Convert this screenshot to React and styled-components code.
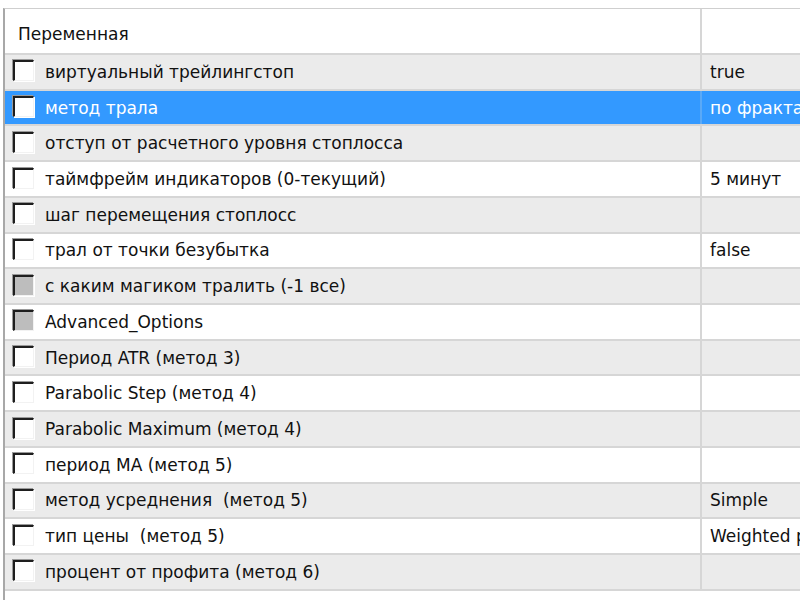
import styled, { createGlobalStyle } from 'styled-components';

const GlobalStyle = createGlobalStyle`
    html, body {
        margin: 0;
        padding: 0;
        background: #fff;
        overflow: hidden;
    }
    body {
        font-family: "DejaVu Sans", "Liberation Sans", sans-serif;
        font-size: 17px;
        color: #111;
    }
`

const Frame = styled.div`
    margin: 8px 0 0 3px;
    width: 820px;
    height: 600px;
    border-left: 2px solid #a8a8a8;
    border-top: 1px solid #cfcfcf;
    background: #fff;
`

const HeaderRow = styled.div`
    display: flex;
    height: 46px;
    border-bottom: 2px solid #d6d6d6;
    box-sizing: border-box;
`

const HeaderCell = styled.div`
    display: flex;
    align-items: center;
    width: ${p => p.$w ? p.$w + 'px' : 'auto'};
    flex: ${p => p.$w ? 'none' : '1'};
    padding: 5px 0 0 13px;
    box-sizing: border-box;
    border-right: ${p => p.$w ? '2px solid #d6d6d6' : 'none'};
`

const Row = styled.div`
    display: flex;
    height: 35.73px;
    box-sizing: border-box;
    border-bottom: 2px solid #d6d6d6;
    background: ${p => p.$selected ? '#3399ff' : p.$odd ? '#ebebeb' : '#fff'};
    color: ${p => p.$selected ? '#fff' : '#111'};
`

const NameCell = styled.div`
    display: flex;
    align-items: center;
    gap: 11px;
    width: 697px;
    padding-left: 8px;
    box-sizing: border-box;
    border-right: 2px solid ${p => p.$selected ? '#5aa9f7' : '#d6d6d6'};
    white-space: pre;
`

const ValueCell = styled.div`
    display: flex;
    align-items: center;
    flex: 1;
    padding-left: 8px;
    white-space: nowrap;
    overflow: hidden;
`

const Check = styled.span`
    flex: none;
    width: 21px;
    height: 21px;
    margin-top: -2px;
    box-sizing: border-box;
    border-style: solid;
    border-width: 2px 1px 1px 2px;
    border-color: #1e1e1e #f2f2f2 #f2f2f2 #1e1e1e;
    box-shadow: -1px -1px 0 #9a9a9a, 1px 1px 0 #fff;
    background: ${p => p.$grey ? '#bdbdbd' : '#fff'};
`

const rows = [
    { name: 'виртуальный трейлингстоп', value: 'true' },
    { name: 'метод трала', value: 'по фракталам', selected: true },
    { name: 'отступ от расчетного уровня стоплосса', value: '' },
    { name: 'таймфрейм индикаторов (0-текущий)', value: '5 минут' },
    { name: 'шаг перемещения стоплосс', value: '' },
    { name: 'трал от точки безубытка', value: 'false' },
    { name: 'с каким магиком тралить (-1 все)', value: '', grey: true },
    { name: 'Advanced_Options', value: '', grey: true },
    { name: 'Период ATR (метод 3)', value: '' },
    { name: 'Parabolic Step (метод 4)', value: '' },
    { name: 'Parabolic Maximum (метод 4)', value: '' },
    { name: 'период MA (метод 5)', value: '' },
    { name: 'метод усреднения  (метод 5)', value: 'Simple' },
    { name: 'тип цены  (метод 5)', value: 'Weighted price' },
    { name: 'процент от профита (метод 6)', value: '' },
]

export default function App() {
    return (
        <>
            <GlobalStyle />
            <Frame>
                <HeaderRow>
                    <HeaderCell $w={697}>Переменная</HeaderCell>
                    <HeaderCell />
                </HeaderRow>
                {rows.map((r, i) =>
                    <Row key={'row' + i} $odd={i % 2 === 0} $selected={r.selected}>
                        <NameCell $selected={r.selected}>
                            <Check $grey={r.grey} />
                            {r.name}
                        </NameCell>
                        <ValueCell>{r.value}</ValueCell>
                    </Row>
                )}
            </Frame>
        </>
    );
}
